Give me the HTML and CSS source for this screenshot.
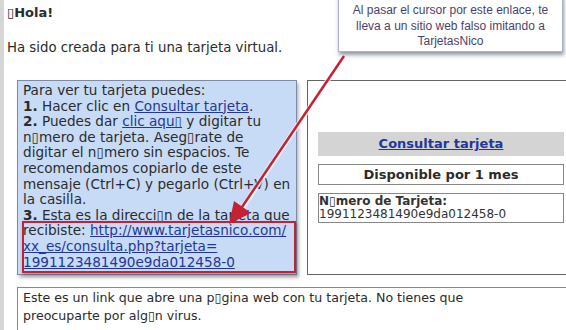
FILE: index.html
```html
<!DOCTYPE html>
<html lang="es">
  <head>
    <meta charset="UTF-8" />
    <meta name="viewport" content="width=device-width, initial-scale=1.0" />
    <title>Tarjeta virtual</title>
    <link rel="stylesheet" href="styles.css">
  </head>
  <body>
    <div class="page">
      <p class="hello">▯Hola!</p>
      <p class="intro">Ha sido creada para ti una tarjeta virtual.</p>

      <div class="row">
        <div class="steps">
          Para ver tu tarjeta puedes:<br />
          <b>1.</b> Hacer clic en <a href="#">Consultar tarjeta</a>.<br />
          <b>2.</b> Puedes dar <a href="#">clic aqu▯</a> y digitar tu<br />
          n▯mero de tarjeta. Aseg▯rate de<br />
          digitar el n▯mero sin espacios. Te<br />
          recomendamos copiarlo de este<br />
          mensaje (Ctrl+C) y pegarlo (Ctrl+V) en<br />
          la casilla.<br />
          <b>3.</b> Esta es la direcci▯n de la tarjeta que<br />
          recibiste: <a href="#">http://www.tarjetasnico.com/<br />xx_es/consulta.php?tarjeta=<br />1991123481490e9da012458-0</a>
          <div class="mark"></div>
        </div>

        <div class="card">
          <div class="consult"><a href="#">Consultar tarjeta</a></div>
          <div class="avail">Disponible por 1 mes</div>
          <div class="number">
            <b>N▯mero de Tarjeta:</b><br />
            1991123481490e9da012458-0
          </div>
        </div>
      </div>

      <div class="note">
        Este es un link que abre una p▯gina web con tu tarjeta. No tienes que<br />
        preocuparte por alg▯n virus.
      </div>
    </div>

    <div class="callout">
      Al pasar el cursor por este enlace, te lleva a un sitio web falso imitando a TarjetasNico
    </div>

    <svg class="arrow" width="566" height="330" viewBox="0 0 566 330">
      <line x1="344" y1="56" x2="243" y2="207" stroke="#ffffff" stroke-width="5" opacity="0.7" />
      <line x1="344" y1="56" x2="240" y2="210" stroke="#c42234" stroke-width="2.5" />
      <polygon points="229,224 234,201 251,213" fill="#c42234" />
    </svg>
  </body>
</html>
```

FILE: styles.css
```css
html {
  overflow: hidden;
}
body {
  margin: 0;
  padding: 0;
  background-color: #fff;
  font-family: "DejaVu Sans", Verdana, sans-serif;
  font-size: 13px;
  color: #2b2b2b;
}
.page {
  border-left: 4px solid #d6d6d6;
  padding: 0 0 0 3px;
  min-height: 330px;
  width: 600px;
}
.hello {
  margin: 0;
  padding-top: 5px;
  font-weight: bold;
  line-height: 16px;
}
.intro {
  margin: 19px 0 0;
  font-size: 13.3px;
  line-height: 16px;
}
a {
  color: #23379b;
}
.row {
  display: flex;
  gap: 10px;
  margin-top: 24px;
  margin-left: 10px;
}
.steps {
  position: relative;
  box-sizing: border-box;
  width: 280px;
  flex-shrink: 0;
  padding: 2px 2px 4px 5px;
  background-color: #c7dbf7;
  border: 1px solid #7c8aa6;
  box-shadow: 2px 3px 3px rgba(0, 0, 0, 0.25);
  font-size: 13.6px;
  line-height: 15.6px;
  white-space: nowrap;
}
.mark {
  position: absolute;
  left: 4px;
  top: 140px;
  width: 270px;
  height: 48px;
  border: 2px solid #c42234;
  box-shadow: 1px 2px 3px rgba(0, 0, 0, 0.3);
}
.card {
  width: 246px;
  flex-shrink: 0;
  border: 1px solid #666;
  padding: 0 10px;
  display: flex;
  flex-direction: column;
  justify-content: center;
  gap: 8px;
  font-size: 12px;
}
.consult {
  background-color: #d4d4d4;
  height: 24px;
  line-height: 24px;
  text-align: center;
  font-weight: bold;
  font-size: 13px;
}
.avail {
  border: 1px solid #888;
  height: 19px;
  line-height: 19px;
  text-align: center;
  font-weight: bold;
  font-size: 13px;
}
.number {
  border: 1px solid #888;
  padding: 1px 0;
  line-height: 13px;
  color: #333;
}
.note {
  margin: 12px 0 0 10px;
  border: 1px solid #888;
  padding: 1px 5px;
  font-size: 12.6px;
  line-height: 18px;
  height: 44px;
}
.callout {
  position: absolute;
  left: 338px;
  top: -5px;
  width: 219px;
  padding: 7px 2px 1px;
  background-color: #fff;
  border: 1px solid #aab4c8;
  box-shadow: 1px 3px 4px rgba(60, 70, 90, 0.55);
  font-family: "Liberation Sans", Arial, sans-serif;
  font-size: 12px;
  line-height: 15.5px;
  color: #4b3f6e;
  text-align: center;
}
.arrow {
  position: absolute;
  left: 0;
  top: 0;
  pointer-events: none;
}
```
